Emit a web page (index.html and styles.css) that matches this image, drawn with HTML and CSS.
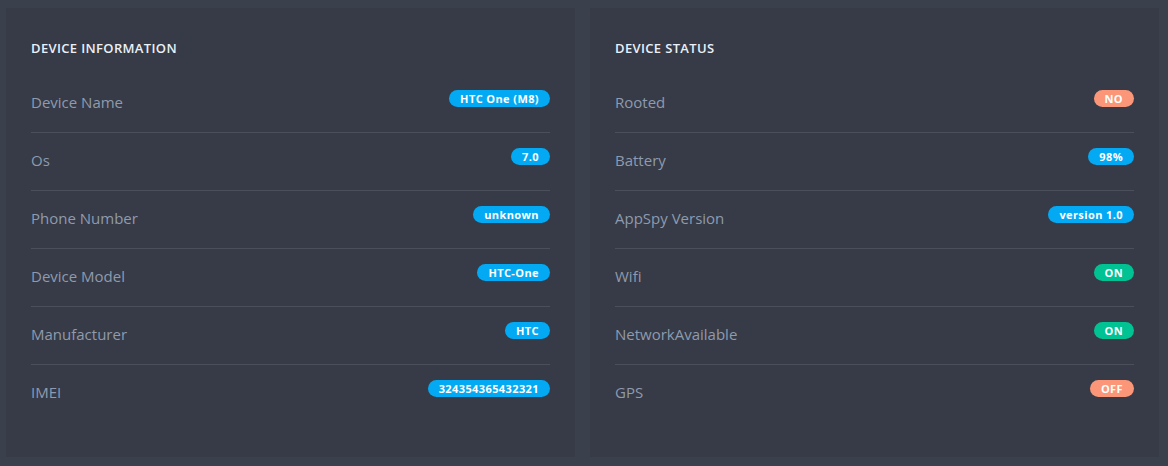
FILE: index.html
```html
<!DOCTYPE html>
<html lang="en">
<head>
<meta charset="utf-8">
<title>Device</title>
<link rel="stylesheet" href="styles.css">
</head>
<body>
<div class="grid">
  <section class="card">
    <h4 class="card-title">DEVICE INFORMATION</h4>
    <ul class="list">
      <li class="row"><span class="label">Device Name</span><span class="badge info">HTC One (M8)</span></li>
      <li class="row"><span class="label">Os</span><span class="badge info">7.0</span></li>
      <li class="row"><span class="label">Phone Number</span><span class="badge info">unknown</span></li>
      <li class="row"><span class="label">Device Model</span><span class="badge info">HTC-One</span></li>
      <li class="row"><span class="label">Manufacturer</span><span class="badge info">HTC</span></li>
      <li class="row"><span class="label">IMEI</span><span class="badge info">324354365432321</span></li>
    </ul>
  </section>
  <section class="card">
    <h4 class="card-title">DEVICE STATUS</h4>
    <ul class="list">
      <li class="row"><span class="label">Rooted</span><span class="badge danger">NO</span></li>
      <li class="row"><span class="label">Battery</span><span class="badge info">98%</span></li>
      <li class="row"><span class="label">AppSpy Version</span><span class="badge info">version 1.0</span></li>
      <li class="row"><span class="label">Wifi</span><span class="badge success">ON</span></li>
      <li class="row"><span class="label">NetworkAvailable</span><span class="badge success">ON</span></li>
      <li class="row"><span class="label">GPS</span><span class="badge danger">OFF</span></li>
    </ul>
  </section>
</div>
</body>
</html>
```

FILE: styles.css
```css
html, body {
  margin: 0;
  padding: 0;
}
body {
  background: #3b404d;
  font-family: "Open Sans", "Liberation Sans", sans-serif;
  height: 466px;
  box-sizing: border-box;
  padding: 8px 9px 9px 6px;
}
.grid {
  display: grid;
  grid-template-columns: 1fr 1fr;
  column-gap: 15px;
  height: 100%;
}
.card {
  background: #363b47;
  padding: 30px 25px 0 25px;
}
.card-title {
  margin: 0 0 17px 0;
  font-size: 13px;
  line-height: 20px;
  font-weight: 600;
  color: #eaf0f8;
  letter-spacing: 0.35px;
}
.list {
  list-style: none;
  margin: 0;
  padding: 0;
}
.row {
  display: flex;
  justify-content: space-between;
  align-items: flex-start;
  height: 57px;
  border-bottom: 1px solid #4a4f5b;
}
.row:last-child {
  border-bottom: none;
}
.label {
  margin-top: 17px;
  font-size: 15px;
  line-height: 20px;
  color: #8f9aae;
}
.badge {
  margin-top: 15px;
  height: 17px;
  line-height: 17px;
  padding: 0 11px;
  border-radius: 9px;
  font-size: 11px;
  font-weight: 700;
  letter-spacing: 0.4px;
  color: #ffffff;
}
.info { background: #03a9f3; }
.success { background: #00c292; }
.danger { background: #fb9678; }
```
